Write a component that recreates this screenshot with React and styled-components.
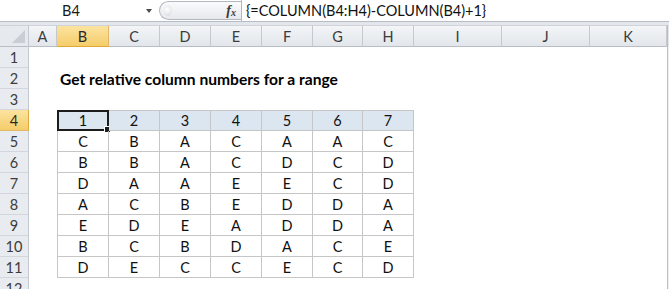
import React from 'react';
import styled, { createGlobalStyle, css } from 'styled-components';

const COLS = ['A', 'B', 'C', 'D', 'E', 'F', 'G', 'H', 'I', 'J', 'K'];
const WIDTHS = [28, 52, 51, 51, 51, 51, 50, 51, 88, 88];
const ROWS = 12;

const table = [
  ['1', '2', '3', '4', '5', '6', '7'],
  ['C', 'B', 'A', 'C', 'A', 'A', 'C'],
  ['B', 'B', 'A', 'C', 'D', 'C', 'D'],
  ['D', 'A', 'A', 'E', 'E', 'C', 'D'],
  ['A', 'C', 'B', 'E', 'D', 'D', 'A'],
  ['E', 'D', 'E', 'A', 'D', 'D', 'A'],
  ['B', 'C', 'B', 'D', 'A', 'C', 'E'],
  ['D', 'E', 'C', 'C', 'E', 'C', 'D'],
];

const GlobalStyle = createGlobalStyle`
  html, body {
    margin: 0;
    padding: 0;
    background: #fff;
    overflow: hidden;
  }
  body {
    font-family: Lato, "Open Sans", sans-serif;
  }
`;

class App extends React.Component {
  cellContent(row, col) {
    // row/col are 1-based sheet coordinates
    if (row === 2 && col === 2) {
      return <Title>Get relative column numbers for a range</Title>;
    }
    if (row >= 4 && row <= 11 && col >= 2 && col <= 8) {
      return table[row - 4][col - 2];
    }
    return null;
  }

  renderRow(row) {
    const cells = COLS.map((letter, i) => {
      const col = i + 1;
      const inTable = row >= 4 && row <= 11 && col >= 2 && col <= 8;
      return (
        <Cell
          key={letter}
          $inTable={inTable}
          $head={row === 4 && inTable}
          $first={col === 2}
          $top={row === 4}
        >
          {this.cellContent(row, col)}
          {row === 4 && col === 2 && (
            <Selection>
              <FillHandle />
            </Selection>
          )}
        </Cell>
      );
    });
    return (
      <React.Fragment key={row}>
        <RowHeader $selected={row === 4}>{row}</RowHeader>
        {cells}
        <Edge />
      </React.Fragment>
    );
  }

  render() {
    const rows = [];
    for (let r = 1; r <= ROWS; r++) rows.push(this.renderRow(r));

    return (
      <Window>
        <GlobalStyle />
        <FormulaBar>
          <NameBox>B4</NameBox>
          <DropArrow />
          <FxControl>
            <Grip />
            <Fx>
              f<sub>x</sub>
            </Fx>
          </FxControl>
          <FormulaInput>{'{=COLUMN(B4:H4)-COLUMN(B4)+1}'}</FormulaInput>
        </FormulaBar>
        <Band />
        <Sheet>
          <Corner>
            <CornerTriangle />
          </Corner>
          {COLS.map((c) => (
            <ColHeader key={c} $selected={c === 'B'}>
              {c}
            </ColHeader>
          ))}
          <EdgeHeader />
          {rows}
        </Sheet>
      </Window>
    );
  }
}

const Window = styled.div`
  width: 669px;
  height: 289px;
  overflow: hidden;
  background: #fff;
`;

const FormulaBar = styled.div`
  display: flex;
  align-items: stretch;
  height: 21px;
  border-bottom: 1px solid #b6bcc5;
  background: #fff;
`;

const NameBox = styled.div`
  width: 142px;
  display: flex;
  align-items: center;
  justify-content: center;
  font-family: Lato, sans-serif;
  font-size: 14.5px;
  color: #1a1a1a;
`;

const DropArrow = styled.div`
  width: 0;
  height: 0;
  margin: 9px 6px 0 4px;
  border-left: 3.5px solid transparent;
  border-right: 3.5px solid transparent;
  border-top: 4px solid #4a4a4a;
`;

const FxControl = styled.div`
  position: relative;
  width: 82px;
  margin: 1px 0 1px 1px;
  border: 1px solid #b2b8c0;
  border-right: none;
  border-radius: 10px 0 0 10px;
  background: linear-gradient(#fbfbfc, #e6e8ec);
  display: flex;
  align-items: center;
  justify-content: flex-end;
  padding-right: 5px;
  box-sizing: border-box;
`;

const Grip = styled.div`
  position: absolute;
  left: 4px;
  top: 3px;
  width: 8px;
  height: 11px;
  border-radius: 50%;
  background: radial-gradient(circle at 40% 40%, #ffffff, #d3d7dd);
`;

const Fx = styled.span`
  font-family: "Liberation Serif", serif;
  font-style: italic;
  font-weight: bold;
  font-size: 14px;
  color: #3a3a3a;
  line-height: 1;

  sub {
    font-size: 10px;
    vertical-align: -1px;
  }
`;

const FormulaInput = styled.div`
  flex: 1;
  border-left: 1px solid #b2b8c0;
  padding-left: 4px;
  display: flex;
  align-items: center;
  font-family: Lato, sans-serif;
  font-size: 14.5px;
  color: #111;
`;

const Band = styled.div`
  height: 3px;
  background: #e3e7ec;
`;

const Sheet = styled.div`
  display: grid;
  grid-template-columns: 29px ${WIDTHS.map((w) => w + 'px').join(' ')} 1fr 2px;
  grid-template-rows: 22px repeat(${ROWS}, 21px);
`;

const headerBase = css`
  box-sizing: border-box;
  display: flex;
  align-items: center;
  justify-content: center;
  font-family: Lato, sans-serif;
  font-size: 14.5px;
  color: #3c3c3c;
`;

const Corner = styled.div`
  ${headerBase};
  position: relative;
  background: #e6e9ee;
  border-right: 1px solid #c4c9d0;
  border-bottom: 1px solid #b9bec6;
  border-top: 1px solid #cfd4da;
`;

const CornerTriangle = styled.div`
  position: absolute;
  right: 3px;
  bottom: 3px;
  width: 0;
  height: 0;
  border-left: 13px solid transparent;
  border-bottom: 13px solid #c9ced5;
`;

const ColHeader = styled.div`
  ${headerBase};
  border-top: 1px solid #cfd4da;
  border-right: 1px solid #c4c9d0;
  border-bottom: 1px solid #b9bec6;
  background: linear-gradient(#f3f5f7, #e2e6eb);
  ${(p) =>
    p.$selected &&
    css`
      background: linear-gradient(#fbe3a0, #f5cd6a);
      border-bottom-color: #e0a83a;
      border-right-color: #e2b767;
      color: #2a2a2a;
    `}
`;

const EdgeHeader = styled.div`
  background: #e2e6eb;
  border-left: 1px solid #b9bec6;
`;

const RowHeader = styled.div`
  ${headerBase};
  background: #e8ebef;
  border-right: 1px solid #c4c9d0;
  border-bottom: 1px solid #d3d7dd;
  ${(p) =>
    p.$selected &&
    css`
      background: linear-gradient(#fbe3a0, #f5cd6a);
      border-right-color: #e0a83a;
      border-bottom-color: #e2b767;
      color: #2a2a2a;
    `}
`;

const Edge = styled.div`
  background: #eef0f3;
  border-left: 1px solid #b9bec6;
`;

const Cell = styled.div`
  position: relative;
  box-sizing: border-box;
  display: flex;
  align-items: center;
  justify-content: center;
  font-family: Lato, sans-serif;
  font-size: 14.5px;
  color: #111;
  white-space: nowrap;
  ${(p) =>
    p.$inTable &&
    css`
      border-right: 1px solid #c6c6c6;
      border-bottom: 1px solid #c6c6c6;
    `}
  ${(p) => p.$inTable && p.$first && 'border-left: 1px solid #c6c6c6;'}
  ${(p) => p.$inTable && p.$top && 'border-top: 1px solid #c6c6c6;'}
  ${(p) => p.$head && 'background: #dce6f1;'}
`;

const Title = styled.span`
  align-self: center;
  width: 0;
  overflow: visible;
  margin-left: 3px;
  margin-right: auto;
  font-weight: bold;
  font-size: 15.6px;
  color: #000;
`;

const Selection = styled.div`
  position: absolute;
  inset: -1px -1px -1px -1px;
  border: 2px solid #1c1c1c;
  pointer-events: none;
`;

const FillHandle = styled.div`
  position: absolute;
  right: -4px;
  bottom: -4px;
  width: 5px;
  height: 5px;
  background: #1c1c1c;
  border: 1px solid #fff;
`;

export default App;
